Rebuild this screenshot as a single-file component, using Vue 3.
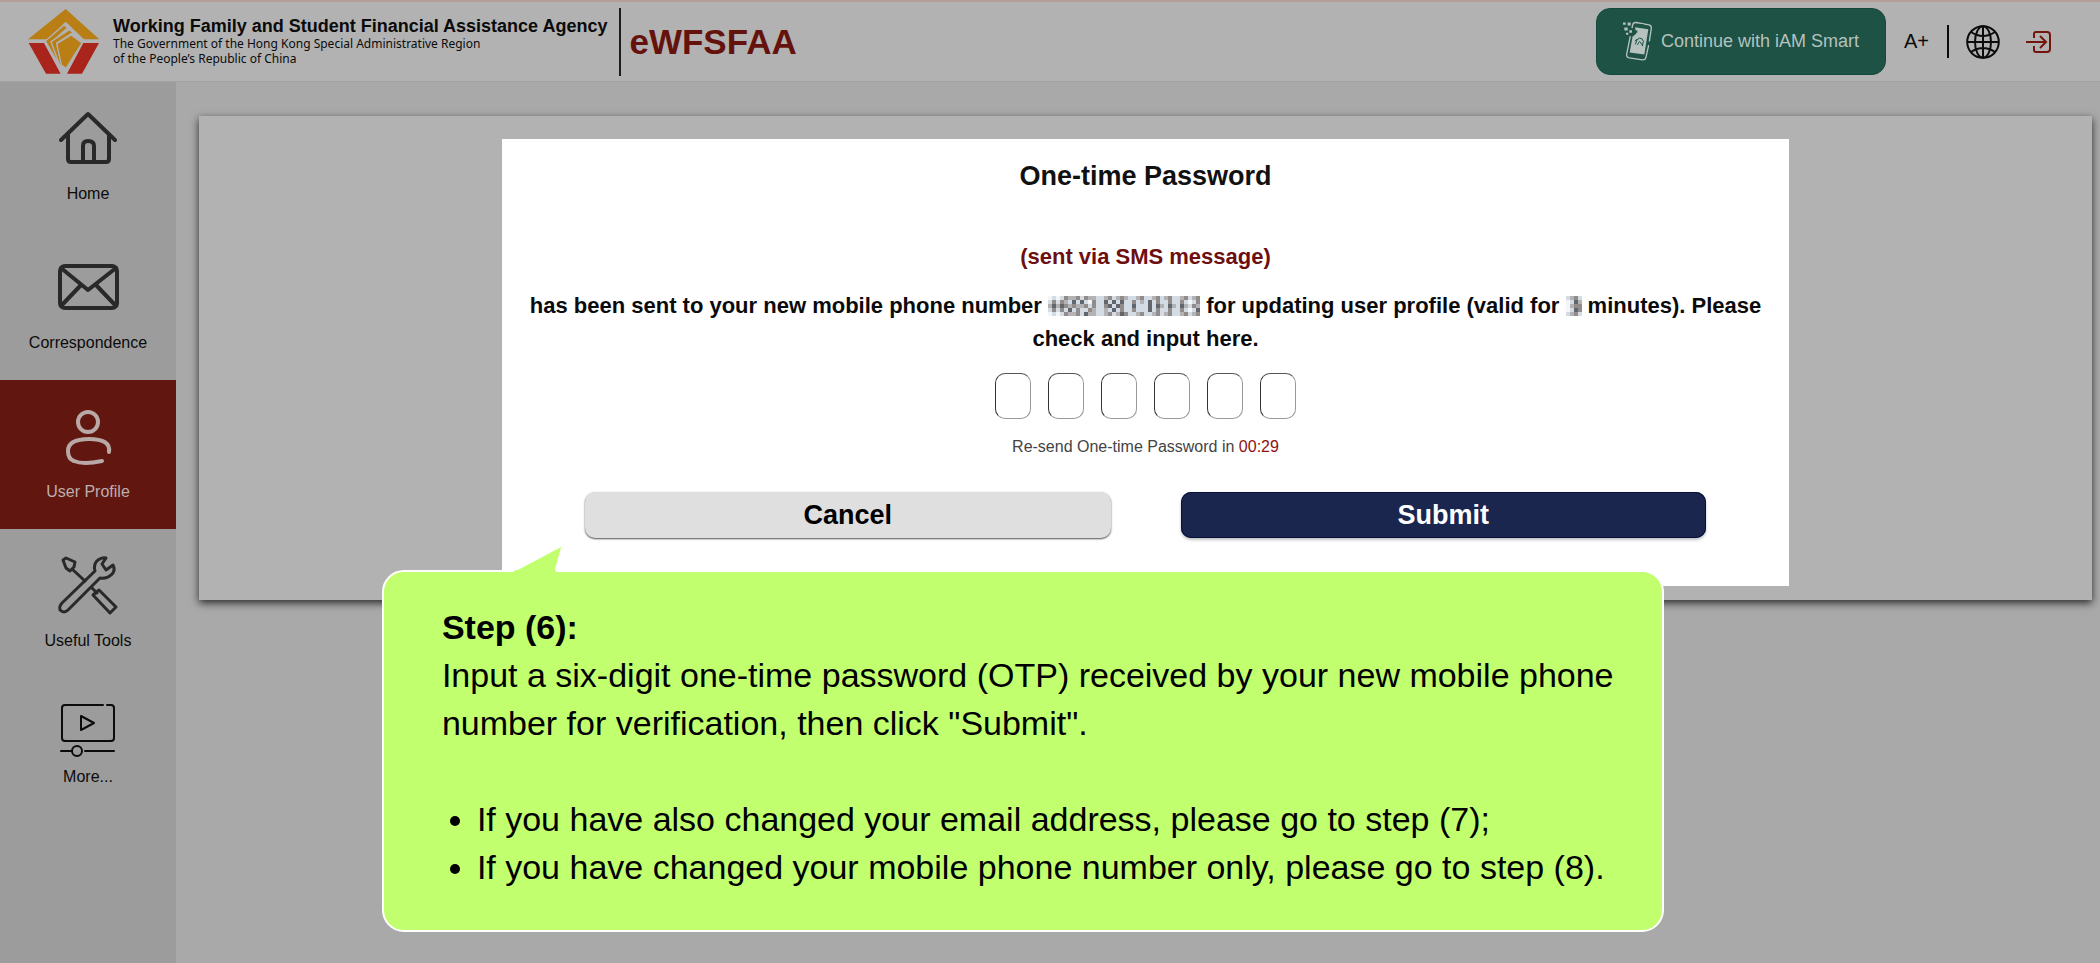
<template>
  <div class="page">
    <header class="topbar">
      <a class="brand" href="#home">
        <svg class="brand-logo" viewBox="0 0 216 198" aria-hidden="true">
          <path fill="#b97e14" d="M113 0 214 91H168L113 38 58 91H0Z" />
          <path fill="#a9251b" d="M2 102H48L98 194H54ZM166 102H213L162 194H117Z" />
          <path fill="#b97e14" stroke="#b2b2b2" stroke-width="4" d="M52 96 108 48 119 56 72 98 96 168 88 158Z" />
          <path fill="#b97e14" stroke="#b2b2b2" stroke-width="4" d="M69 98 124 62 136 70 86 102 104 176 94 166Z" />
          <path fill="#b97e14" stroke="#b2b2b2" stroke-width="4" d="M86 104 130 78 162 102 114 178 100 168Z" />
        </svg>
        <span class="brand-text">
          <strong>Working Family and Student Financial Assistance Agency</strong>
          <span>The Government of the Hong Kong Special Administrative Region</span>
          <span>of the People’s Republic of China</span>
        </span>
      </a>
      <span class="system">eWFSFAA</span>

      <div class="actions">
        <button class="iam" type="button">
          <svg viewBox="0 0 90 122" width="30" height="41" aria-hidden="true">
            <g fill="none" stroke="#b5c2be" stroke-width="4" stroke-linejoin="round">
              <path d="M27 21 29 11Q31 3 39 4L78 11Q86 13 85 21L79 61M77 72 69 108Q67 117 58 116L19 110Q9 108 11 99L22 45" />
            </g>
            <path fill="#b5c2be" d="M36 18 76 24 64 100 20 94 29 45 40 38Z" />
            <path fill="#b5c2be" d="M0 4h8v7H0zM14 4h9v9h-9zM4 19h10v9H4zM19 27h8v8h-8zM9 35h7v6H9z" />
            <g fill="none" stroke="#1d5245" stroke-width="3">
              <path d="M37 70Q40 53 49 51Q59 50 61 60L58 75M44 71Q46 62 50 61L58 72M36 60 43 53" />
            </g>
            <path fill="#1d5245" d="M36 28h7v7h-7zM26 36h8v7h-8zM50 8l13 2v4l-13-2zM34 103l14 2v5l-14-2z" />
          </svg>
          <span>Continue with iAM Smart</span>
        </button>
        <button class="plain font-size" type="button" aria-label="Larger text">A+</button>
        <span class="separator"></span>
        <button class="plain" type="button" aria-label="Language">
          <svg viewBox="0 0 34 34" width="34" height="34" fill="none" stroke="#0b0b0b" stroke-width="2" aria-hidden="true">
            <circle cx="17" cy="17" r="15.8" />
            <ellipse cx="17" cy="17" rx="8" ry="15.8" />
            <path d="M17 1V33M1 17H33M5 7Q17 15 29 7M5 27Q17 19 29 27" />
          </svg>
        </button>
        <button class="plain logout" type="button" aria-label="Logout">
          <svg viewBox="0 0 26 24" width="26" height="24" fill="none" stroke="#74150d" stroke-width="2" aria-hidden="true">
            <path d="M8 8V4Q8 2 10 2H21Q24 2 24 5V19Q24 22 21 22H10Q8 22 8 20V16M0 12H19M14 6 20 12 14 18" />
          </svg>
        </button>
      </div>
    </header>

    <div class="body">
      <nav class="sidebar" aria-label="Main menu">
        <a href="#home" class="item">
          <svg viewBox="0 0 64 64" aria-hidden="true">
            <path d="M5 34 32 8 59 34M12 29V53Q12 56 15 56H50Q53 56 53 53V29M27 56V40Q27 35 32 35Q38 35 38 40V56" />
          </svg>
          <span>Home</span>
        </a>
        <a href="#correspondence" class="item">
          <svg viewBox="0 0 64 64" aria-hidden="true">
            <rect x="4" y="11" width="57" height="42" rx="5" />
            <path d="M5 13 32 35 60 13M5 51 25 30M60 51 40 30" />
          </svg>
          <span>Correspondence</span>
        </a>
        <a href="#profile" class="item active">
          <svg viewBox="0 0 64 64" aria-hidden="true">
            <circle cx="32" cy="18" r="10" />
            <path d="M53 48Q55 35 33 35Q12 35 12 47Q12 55 18 57Q27 61 46 57" />
          </svg>
          <span>User Profile</span>
        </a>
        <a href="#tools" class="item tools">
          <svg viewBox="0 0 64 64" aria-hidden="true">
            <path d="M4 57Q3 53 6 50L39 18Q37 11 42 7Q46 4 50 5L46 11 50 17 57 12Q60 18 55 22Q51 26 44 25L12 57Q8 61 4 57Z" />
            <path d="M7 7 10 5 19 9 18 14 14 18 10 15ZM16 16 29 28M36 35 41 40M37 42 43 37 60 54 54 60Z" />
          </svg>
          <span>Useful Tools</span>
        </a>
        <a href="#more" class="item more">
          <svg viewBox="0 0 56 56" aria-hidden="true">
            <path d="M43 3H5Q2 3 2 6V36Q2 39 5 39H51Q54 39 54 36V6Q54 3 51 3H47M21 14V28L34 21ZM1 49H11M25 49H54" />
            <circle cx="17" cy="49" r="5" />
          </svg>
          <span>More...</span>
        </a>
      </nav>

      <main class="content">
        <section class="card">
          <div class="dialog" role="dialog" aria-labelledby="otp-title">
            <form @submit.prevent>
              <h1 id="otp-title">One-time Password</h1>
              <p class="via">(sent via SMS message)</p>
              <p class="message">
                has been sent to your new mobile phone number
                <svg class="mosaic" :width="phone.width" height="20" aria-hidden="true">
                  <rect v-for="(c, i) in phone.cells" :key="i" :x="c.x" :y="c.y" width="4" height="4" :fill="c.fill" />
                </svg>
                for updating user profile (valid for
                <svg class="mosaic" :width="minutes.width" height="20" aria-hidden="true">
                  <rect v-for="(c, i) in minutes.cells" :key="i" :x="c.x" :y="c.y" width="4" height="4" :fill="c.fill" />
                </svg>
                minutes). Please<br />
                check and input here.
              </p>

              <div class="digits">
                <input
                  v-for="(d, i) in digits"
                  :key="i"
                  v-model="digits[i]"
                  type="text"
                  inputmode="numeric"
                  maxlength="1"
                  :aria-label="`Digit ${i + 1}`"
                />
              </div>
              <p class="resend">Re-send One-time Password in <span>{{ countdown }}</span></p>

              <div class="buttons">
                <button class="cancel" type="button">Cancel</button>
                <button class="submit" type="submit">Submit</button>
              </div>
            </form>

            <!-- Step callout -->
            <aside class="callout">
              <svg class="pointer" viewBox="0 0 52 30" aria-hidden="true">
                <path d="M3 27 50 2 43 27" fill="#c1ff6e" stroke="#fff" stroke-width="1" />
                <path d="M3 26H44V30H0Z" fill="#c1ff6e" />
              </svg>
              <h2>Step (6):</h2>
              <p>
                Input a six-digit one-time password (OTP) received by your new mobile phone
                number for verification, then click "Submit".
              </p>
              <ul>
                <li>If you have also changed your email address, please go to step (7);</li>
                <li>If you have changed your mobile phone number only, please go to step (8).</li>
              </ul>
            </aside>
          </div>
        </section>
      </main>
    </div>
  </div>
</template>

<script setup>
import { ref } from "vue";

const digits = ref(["", "", "", "", "", ""]);
const countdown = ref("00:29");

// Masked values: one character per 4px cell, darker for higher numbers
const shades = ["#f4f5f6", "#d3dce4", "#b3b2b5", "#918b89", "#62656b"];

function mosaic(rows) {
  const cells = [];
  rows.forEach((row, y) => {
    [...row].forEach((s, x) => {
      cells.push({ x: x * 4, y: y * 4, fill: shades[s] });
    });
  });
  return { width: rows[0].length * 4, cells };
}

const phone = mosaic([
  "01013223132211231232112311231231123123",
  "13132141410311414141131214131131131013",
  "24243232231311341431141114142142142132",
  "13131413113211214131131114131131131014",
  "01013223142211231243112311231231123123",
]);

const minutes = mosaic(["1231", "0142", "0233", "0143", "1231"]);
</script>

<style>
body {
  margin: 0;
  background: #a9a9a9;
}
</style>

<style scoped>
.page {
  min-height: 100vh;
  display: flex;
  flex-direction: column;
  font-family: "Liberation Sans", Arial, sans-serif;
  color: #0b0b0b;
}
a {
  color: inherit;
  text-decoration: none;
}
button {
  font-family: inherit;
  cursor: pointer;
}
h1,
h2,
p,
ul {
  margin: 0;
}

/* Top bar */
.topbar {
  display: flex;
  align-items: center;
  box-sizing: border-box;
  height: 82px;
  padding: 0 48px 0 28px;
  background: #b2b2b2;
  border-top: 2px solid #b39f97;
  border-bottom: 1px solid #a3a3a3;
}
.brand {
  display: flex;
  align-items: center;
  gap: 13px;
  padding-right: 12px;
}
.brand-logo {
  width: 72px;
  height: 66px;
}
.brand-text {
  display: flex;
  flex-direction: column;
  padding-bottom: 2px;
  font-family: "Noto Sans", sans-serif;
  font-size: 12px;
  line-height: 15px;
}
.brand-text strong {
  font-family: "Liberation Sans", Arial, sans-serif;
  font-size: 18px;
  line-height: 20px;
}
.system {
  display: flex;
  align-items: center;
  height: 68px;
  padding-left: 8px;
  border-left: 2px solid #1c1c1c;
  color: #65120d;
  font-size: 35px;
  font-weight: bold;
}
.actions {
  display: flex;
  align-items: center;
  margin-left: auto;
}
.iam {
  display: flex;
  align-items: center;
  gap: 8px;
  height: 67px;
  padding: 0 26px;
  border: 1px solid #144a3c;
  border-radius: 14px;
  background: #1d5245;
  color: #b5c2be;
  font-size: 18px;
}
.plain {
  display: flex;
  padding: 0;
  border: 0;
  background: none;
  color: inherit;
}
.font-size {
  margin: 0 18px;
  font-size: 20px;
}
.separator {
  width: 2px;
  height: 33px;
  margin-right: 17px;
  background: #0b0b0b;
}
.logout {
  margin-left: 26px;
}

/* Sidebar */
.body {
  flex: 1;
  display: flex;
}
.sidebar {
  flex: none;
  width: 176px;
  background: #9c9c9c;
}
.item {
  display: flex;
  flex-direction: column;
  align-items: center;
  gap: 14px;
  box-sizing: border-box;
  height: 149px;
  padding-top: 24px;
  font-size: 16px;
  line-height: 20px;
}
.item svg {
  width: 64px;
  height: 64px;
  fill: none;
  stroke: #292929;
  stroke-width: 4;
  stroke-linecap: round;
  stroke-linejoin: round;
}
.item.active {
  background: #611710;
  color: #bcafad;
}
.item.active svg {
  stroke: #b8a9a7;
}
.item.tools svg {
  stroke-width: 3;
}
.item.more {
  gap: 9px;
}
.item.more svg {
  width: 56px;
  height: 56px;
  stroke: #0b0b0b;
  stroke-width: 2;
}

/* Content */
.content {
  flex: 1;
  min-width: 0;
  padding: 34px 8px 34px 23px;
}
.card {
  padding: 23px 0 14px;
  background: #b2b2b2;
  box-shadow: 0 3px 8px rgba(0, 0, 0, 0.75);
}
.dialog {
  position: relative;
  width: 68%;
  margin: 0 auto;
  background: #fff;
}
.dialog form {
  padding: 19px 20px 48px;
  text-align: center;
}
h1 {
  font-size: 27px;
  line-height: 36px;
  color: #111;
}
.via,
.message {
  font-size: 22px;
  font-weight: bold;
  line-height: 33px;
}
.via {
  margin-top: 46px;
  color: #6d0f0f;
}
.message {
  margin-top: 16px;
}
.mosaic {
  vertical-align: -3px;
}
.digits {
  display: flex;
  justify-content: center;
  gap: 17px;
  margin-top: 18px;
}
.digits input {
  box-sizing: border-box;
  width: 36px;
  height: 46px;
  padding: 0;
  border: 1px solid;
  border-color: #555 #999 #999 #333;
  border-radius: 10px;
  background: #fff;
  font-size: 22px;
  text-align: center;
}
.resend {
  margin-top: 18px;
  font-size: 16px;
  line-height: 20px;
  color: #444;
}
.resend span {
  color: #8e1010;
}
.buttons {
  display: flex;
  gap: 70px;
  margin-top: 35px;
  padding: 0 63px;
}
.buttons button {
  flex: 1;
  height: 46px;
  padding: 0;
  border: 0;
  border-radius: 10px;
  font-size: 27px;
  font-weight: bold;
}
.cancel {
  background: #dfdfdf;
  color: #000;
  box-shadow: 0 1px 2px rgba(0, 0, 0, 0.7);
}
.submit {
  background: #1b264f;
  color: #fff;
  box-shadow: inset 0 0 0 1px #07103a, 0 2px 3px rgba(0, 0, 0, 0.25);
}

/* Callout */
.callout {
  position: absolute;
  top: calc(100% - 16px);
  left: -120px;
  right: 125px;
  padding: 31px 40px 39px 58px;
  border: 2px solid #fff;
  border-radius: 22px;
  background: #c1ff6e;
  color: #000;
  font-size: 34px;
  line-height: 48px;
}
.callout h2 {
  font-size: 34px;
  line-height: 48px;
}
.callout ul {
  margin-top: 48px;
  padding-left: 35px;
}
.pointer {
  position: absolute;
  left: 128px;
  top: -28px;
  width: 52px;
  height: 30px;
}
</style>
